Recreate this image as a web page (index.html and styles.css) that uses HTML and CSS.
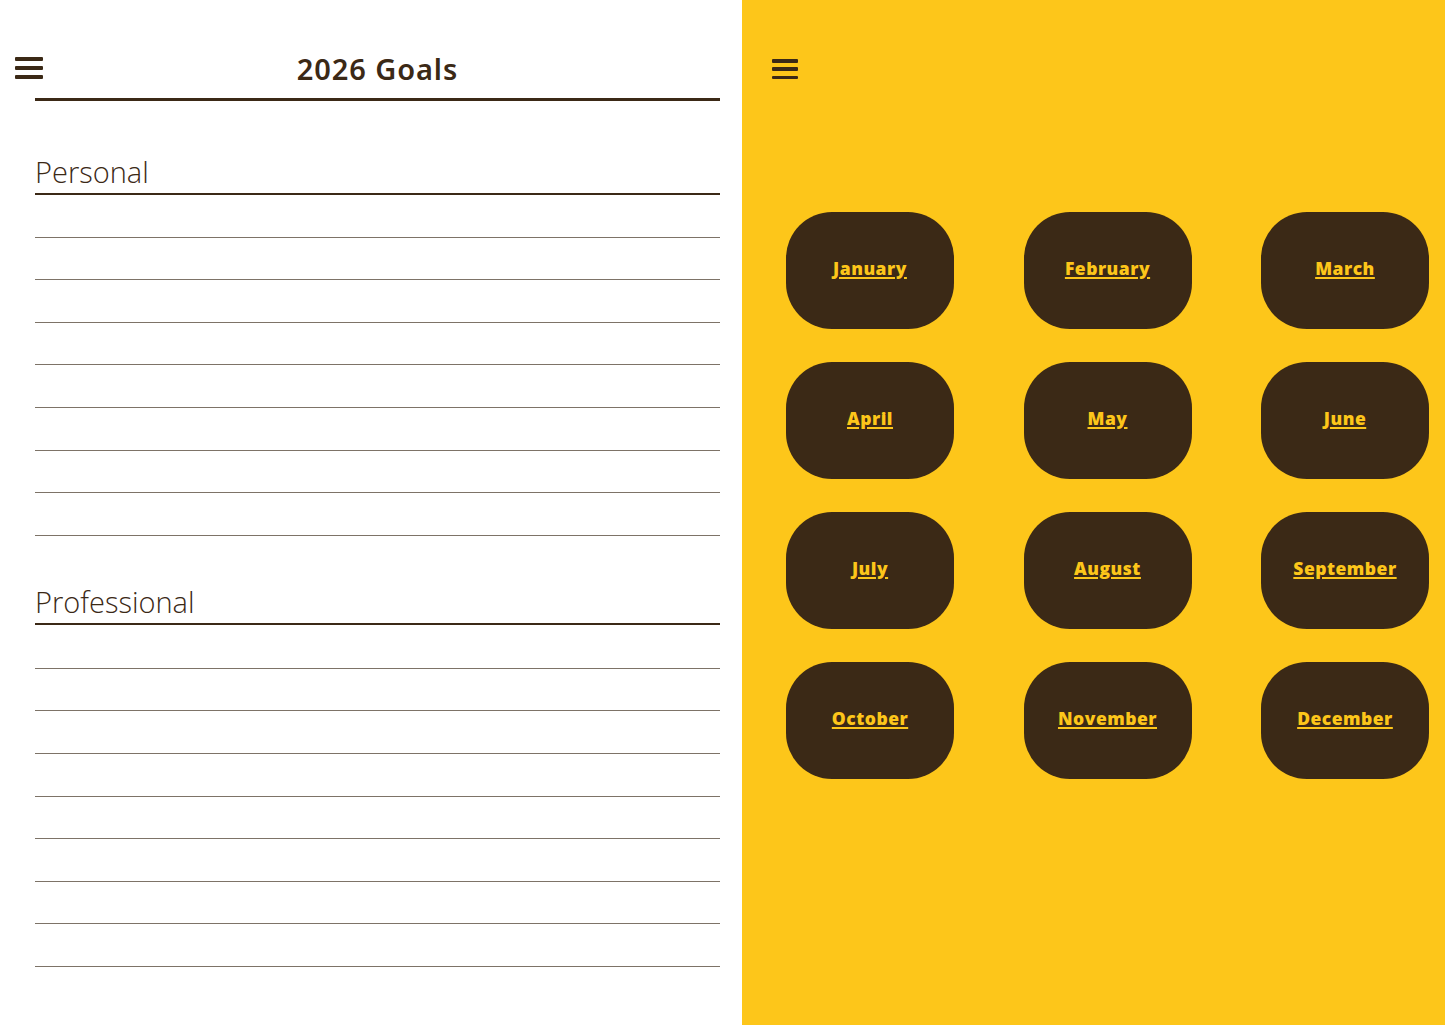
FILE: index.html
```html
<!DOCTYPE html>
<html lang="en">
<head>
<meta charset="utf-8">
<title>2026 Goals</title>
<link rel="stylesheet" href="styles.css">
</head>
<body>
<div class="page">
  <section class="goals">
    <header class="goals-head">
      <button class="burger" aria-label="Menu"><span></span><span></span><span></span></button>
      <h1 class="title">2026 Goals</h1>
    </header>
    <div class="sheet">
      <div class="group">
        <h2 class="group-title">Personal</h2>
        <div class="line"></div><div class="line"></div><div class="line"></div><div class="line"></div>
        <div class="line"></div><div class="line"></div><div class="line"></div><div class="line"></div>
      </div>
      <div class="group group-pro">
        <h2 class="group-title">Professional</h2>
        <div class="line"></div><div class="line"></div><div class="line"></div><div class="line"></div>
        <div class="line"></div><div class="line"></div><div class="line"></div><div class="line"></div>
      </div>
    </div>
  </section>
  <section class="months">
    <button class="burger burger-sm" aria-label="Menu"><span></span><span></span><span></span></button>
    <nav class="month-grid">
      <a class="month" href="#">January</a>
      <a class="month" href="#">February</a>
      <a class="month" href="#">March</a>
      <a class="month" href="#">April</a>
      <a class="month" href="#">May</a>
      <a class="month" href="#">June</a>
      <a class="month" href="#">July</a>
      <a class="month" href="#">August</a>
      <a class="month" href="#">September</a>
      <a class="month" href="#">October</a>
      <a class="month" href="#">November</a>
      <a class="month" href="#">December</a>
    </nav>
  </section>
</div>
</body>
</html>
```
FILE: styles.css
```css
* { box-sizing: border-box; }
html, body { margin: 0; padding: 0; }
body {
  width: 1445px;
  height: 1025px;
  overflow: hidden;
  font-family: "Open Sans", "Noto Sans", sans-serif;
  color: #3b2916;
  background: #fff;
}
.page {
  display: grid;
  grid-template-columns: 742px 703px;
  height: 1025px;
}
.goals {
  background: #fff;
  padding: 57px 22px 0 15px;
}
.goals-head {
  display: flex;
  align-items: center;
  height: 22px;
}
.burger {
  display: flex;
  flex-direction: column;
  justify-content: space-between;
  width: 28px;
  height: 22px;
  padding: 0;
  border: 0;
  background: none;
  cursor: pointer;
}
.burger span {
  display: block;
  height: 4px;
  border-radius: 1px;
  background: #3b2916;
}
.burger-sm {
  width: 26px;
  height: 20px;
}
.burger-sm span { height: 3.5px; }
.title {
  flex: 1;
  margin: 0;
  text-align: center;
  font-family: "Noto Sans", sans-serif;
  font-weight: 600;
  font-size: 29px;
  letter-spacing: 0.9px;
  line-height: 22px;
  padding-top: 1px;
  padding-right: 8px;
  color: #3b2916;
}
.sheet {
  margin-left: 20px;
  border-top: 3px solid #3b2916;
  margin-top: 19px;
}
.group { padding-top: 54px; }
.group-pro { padding-top: 49px; }
.group-title {
  margin: 0;
  font-family: "Open Sans", sans-serif;
  font-weight: 300;
  font-size: 29px;
  line-height: 34px;
  padding-bottom: 4px;
  color: #3b2916;
  border-bottom: 2px solid #3b2916;
}
.line {
  height: 42.6px;
  border-bottom: 1px solid #7d7367;
}
.group-pro .line:first-of-type { height: 44px; }
.months {
  background: #fdc61a;
  padding: 59px 16px 0 30px;
  display: flex;
  flex-direction: column;
  align-items: flex-start;
}
.month-grid {
  display: grid;
  grid-template-columns: repeat(3, 168px);
  grid-auto-rows: 117px;
  column-gap: 69.5px;
  row-gap: 33px;
  margin-top: 133px;
  margin-left: 14px;
}
.month {
  display: flex;
  align-items: center;
  justify-content: center;
  padding-bottom: 5px;
  background: #3b2916;
  border-radius: 46px;
  color: #fdc61a;
  font-family: "Open Sans", sans-serif;
  font-weight: 800;
  font-size: 17.5px;
  letter-spacing: 0.5px;
  text-decoration: underline;
  text-decoration-thickness: 2px;
  text-underline-offset: 2px;
}
```
